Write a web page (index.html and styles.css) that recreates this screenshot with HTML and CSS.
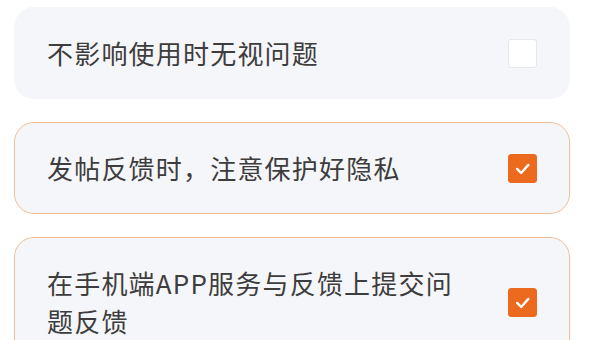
FILE: index.html
```html
<!DOCTYPE html>
<html lang="zh-CN">
<head>
<meta charset="utf-8">
<title>反馈须知</title>
<link rel="stylesheet" href="styles.css">
</head>
<body>
<div class="list">
  <div class="card">
    <div class="label">不影响使用时无视问题</div>
    <div class="box"></div>
  </div>
  <div class="card card-on">
    <div class="label">发帖反馈时，注意保护好隐私</div>
    <div class="box box-on"><svg viewBox="0 0 30 30" width="30" height="30"><polyline points="9,15.5 13.5,20 21.5,11" fill="none" stroke="#fff" stroke-width="2.6" stroke-linecap="round" stroke-linejoin="round"/></svg></div>
  </div>
  <div class="card card-on">
    <div class="label">在手机端APP服务与反馈上提交问<br>题反馈</div>
    <div class="box box-on"><svg viewBox="0 0 30 30" width="30" height="30"><polyline points="9,15.5 13.5,20 21.5,11" fill="none" stroke="#fff" stroke-width="2.6" stroke-linecap="round" stroke-linejoin="round"/></svg></div>
  </div>
</div>
</body>
</html>
```
FILE: styles.css
```css
html, body {
  margin: 0;
  padding: 0;
  background: #ffffff;
  width: 600px;
  height: 340px;
  overflow: hidden;
}
.list {
  display: flex;
  flex-direction: column;
  gap: 23px;
  padding: 7px 30px 0 14px;
}
.card {
  display: flex;
  align-items: center;
  justify-content: space-between;
  background: #f5f6fa;
  border: 1.5px solid #f5f6fa;
  border-radius: 20px;
  padding: 26px 32px 26px 32px;
}
.card-on {
  border-color: #f2bf96;
}
.label {
  font-family: "Noto Sans CJK SC", "Noto Sans", sans-serif;
  font-size: 26px;
  letter-spacing: 1.2px;
  line-height: 38px;
  color: #3d3d3d;
}
.box {
  width: 29px;
  height: 29px;
  flex: none;
  box-sizing: border-box;
  background: #ffffff;
  border: 1.5px solid #e6e7ea;
  border-radius: 3px;
  display: flex;
  align-items: center;
  justify-content: center;
}
.box-on {
  background: #ec6a1e;
  border-color: #ec6a1e;
}
.box svg {
  display: block;
  width: 29px;
  height: 29px;
}
```
